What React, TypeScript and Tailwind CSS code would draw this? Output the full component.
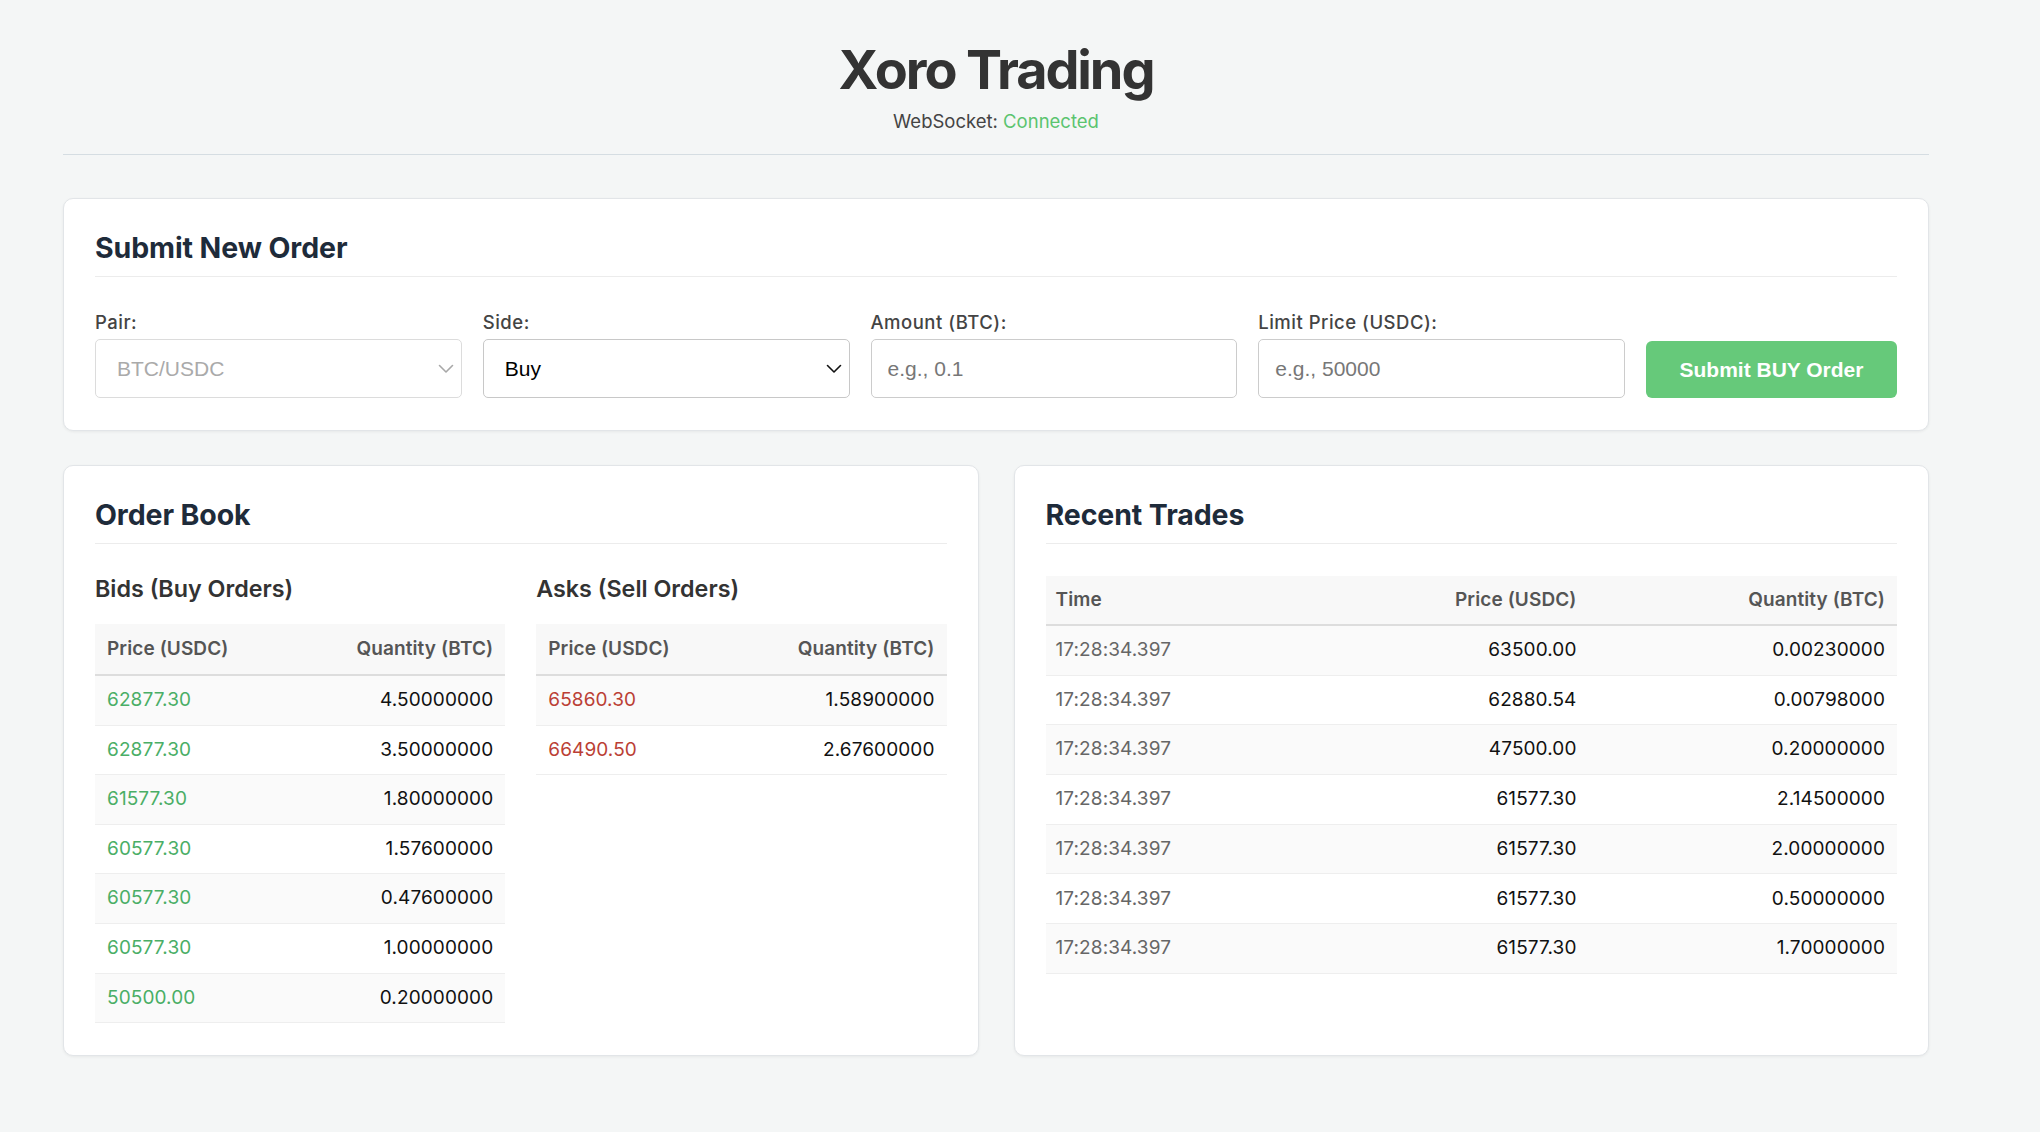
const bids = [
  ["62877.30", "4.50000000"],
  ["62877.30", "3.50000000"],
  ["61577.30", "1.80000000"],
  ["60577.30", "1.57600000"],
  ["60577.30", "0.47600000"],
  ["60577.30", "1.00000000"],
  ["50500.00", "0.20000000"],
];

const asks = [
  ["65860.30", "1.58900000"],
  ["66490.50", "2.67600000"],
];

const trades = [
  ["17:28:34.397", "63500.00", "0.00230000"],
  ["17:28:34.397", "62880.54", "0.00798000"],
  ["17:28:34.397", "47500.00", "0.20000000"],
  ["17:28:34.397", "61577.30", "2.14500000"],
  ["17:28:34.397", "61577.30", "2.00000000"],
  ["17:28:34.397", "61577.30", "0.50000000"],
  ["17:28:34.397", "61577.30", "1.70000000"],
];

const inter = "font-['Inter',sans-serif]";
const arial = "font-['Liberation_Sans',Arial,sans-serif]";
const label = "block text-[18.5px] leading-[22px] font-medium tracking-[0.5px] text-[#444] mb-[6px]";

const Chevron = ({ color }: { color: string }) => (
  <svg width="16" height="10" viewBox="0 0 16 10" fill="none" className="absolute right-[7px] top-1/2 -translate-y-1/2">
    <path d="M1.5 1.5 L8 8 L14.5 1.5" stroke={color} strokeWidth="1.6" strokeLinecap="round" strokeLinejoin="round" />
  </svg>
);

const CardTitle = ({ children }: { children: React.ReactNode }) => (
  <h2 className="text-[28.5px] leading-[36px] font-bold text-[#1e2b3a] tracking-[-0.1px] pb-[10px] border-b border-[#ececec]">
    {children}
  </h2>
);

const BookTable = ({ rows, color }: { rows: string[][]; color: string }) => (
  <div className="text-[19px] tracking-[0.1px]">
    <div className="flex justify-between h-[52px] items-center px-[12px] bg-[#f8f8f8] border-b-2 border-[#dddddd] font-semibold text-[#555] text-[19px]">
      <span>Price (USDC)</span>
      <span>Quantity (BTC)</span>
    </div>
    {rows.map((r, i) => (
      <div
        key={i}
        className={`flex justify-between h-[49.6px] items-center px-[12px] border-b border-[#eeeeee] ${i % 2 === 0 ? "bg-[#fafafa]" : "bg-white"}`}
      >
        <span style={{ color }}>{r[0]}</span>
        <span className="text-[#111]">{r[1]}</span>
      </div>
    ))}
  </div>
);

export default function App() {
  return (
    <div className={`min-h-[1132px] bg-[#f4f6f6] ${inter}`}>
      <div className="ml-[63px] w-[1866px]">
        {/* Header */}
        <div className="pt-[37px] pb-[20px] border-b border-[#d5dde2] text-center">
          <h1 className="text-[54px] leading-[65px] font-bold text-[#333] tracking-[-2.1px]">Xoro Trading</h1>
          <p className="mt-[6px] text-[18.5px] leading-[26px] text-[#444]">
            WebSocket: <span className="text-[#5bc46f]">Connected</span>
          </p>
        </div>

        {/* Submit order */}
        <div className="mt-[43px] bg-white border border-[#e2e5e8] rounded-[10px] shadow-[0_1px_3px_rgba(0,0,0,0.06)] px-[31px] pt-[31px] pb-[32px]">
          <CardTitle>Submit New Order</CardTitle>
          <div className="flex items-end gap-[21px] mt-[34px]">
            <div className="flex-1">
              <label className={label}>Pair:</label>
              <div className="relative h-[59px] rounded-[5px] border border-[#dcdcdc] bg-white flex items-center pl-[21px]">
                <span className={`text-[21px] text-[#aaa] ${arial}`}>BTC/USDC</span>
                <Chevron color="#a8a8a8" />
              </div>
            </div>
            <div className="flex-1">
              <label className={label}>Side:</label>
              <div className="relative h-[59px] rounded-[5px] border border-[#c8c8c8] bg-white flex items-center pl-[21px]">
                <span className={`text-[21px] text-black ${arial}`}>Buy</span>
                <Chevron color="#111" />
              </div>
            </div>
            <div className="flex-1">
              <label className={label}>Amount (BTC):</label>
              <input
                placeholder="e.g., 0.1"
                className={`w-full h-[59px] rounded-[5px] border border-[#cccccc] bg-white px-[16px] text-[21px] placeholder:text-[#777] outline-none ${arial}`}
              />
            </div>
            <div className="flex-1">
              <label className={label}>Limit Price (USDC):</label>
              <input
                placeholder="e.g., 50000"
                className={`w-full h-[59px] rounded-[5px] border border-[#cccccc] bg-white px-[16px] text-[21px] placeholder:text-[#777] outline-none ${arial}`}
              />
            </div>
            <button className={`w-[251px] h-[57px] rounded-[6px] bg-[#66c97a] text-white text-[21px] font-bold ${arial}`}>
              Submit BUY Order
            </button>
          </div>
        </div>

        {/* Bottom cards */}
        <div className="grid grid-cols-2 gap-[35px] mt-[34px]">
          <div className="bg-white border border-[#e2e5e8] rounded-[10px] shadow-[0_1px_3px_rgba(0,0,0,0.06)] px-[31px] pt-[31px] pb-[32px]">
            <CardTitle>Order Book</CardTitle>
            <div className="grid grid-cols-2 gap-[31px] mt-[31px]">
              <div>
                <h3 className="text-[23.3px] leading-[28px] font-semibold text-[#333] mb-[21px]">Bids (Buy Orders)</h3>
                <BookTable rows={bids} color="#4aae66" />
              </div>
              <div>
                <h3 className="text-[23.3px] leading-[28px] font-semibold text-[#333] mb-[21px]">Asks (Sell Orders)</h3>
                <BookTable rows={asks} color="#bb3f35" />
              </div>
            </div>
          </div>

          <div className="bg-white border border-[#e2e5e8] rounded-[10px] shadow-[0_1px_3px_rgba(0,0,0,0.06)] px-[31px] pt-[31px] pb-[32px]">
            <CardTitle>Recent Trades</CardTitle>
            <div className="mt-[32px] text-[19px] tracking-[0.1px]">
              <div className="flex h-[50px] items-center bg-[#f8f8f8] border-b-2 border-[#dddddd] font-semibold text-[#555] text-[19px]">
                <span className="w-[270px] pl-[10px]">Time</span>
                <span className="w-[273px] text-right pr-[12px]">Price (USDC)</span>
                <span className="flex-1 text-right pr-[12px]">Quantity (BTC)</span>
              </div>
              {trades.map((t, i) => (
                <div
                  key={i}
                  className={`flex h-[49.7px] items-center border-b border-[#eeeeee] ${i % 2 === 0 ? "bg-[#fafafa]" : "bg-white"}`}
                >
                  <span className="w-[270px] pl-[10px] text-[#666]">{t[0]}</span>
                  <span className="w-[273px] text-right pr-[12px] text-[#111]">{t[1]}</span>
                  <span className="flex-1 text-right pr-[12px] text-[#111]">{t[2]}</span>
                </div>
              ))}
            </div>
          </div>
        </div>
      </div>
    </div>
  );
}
